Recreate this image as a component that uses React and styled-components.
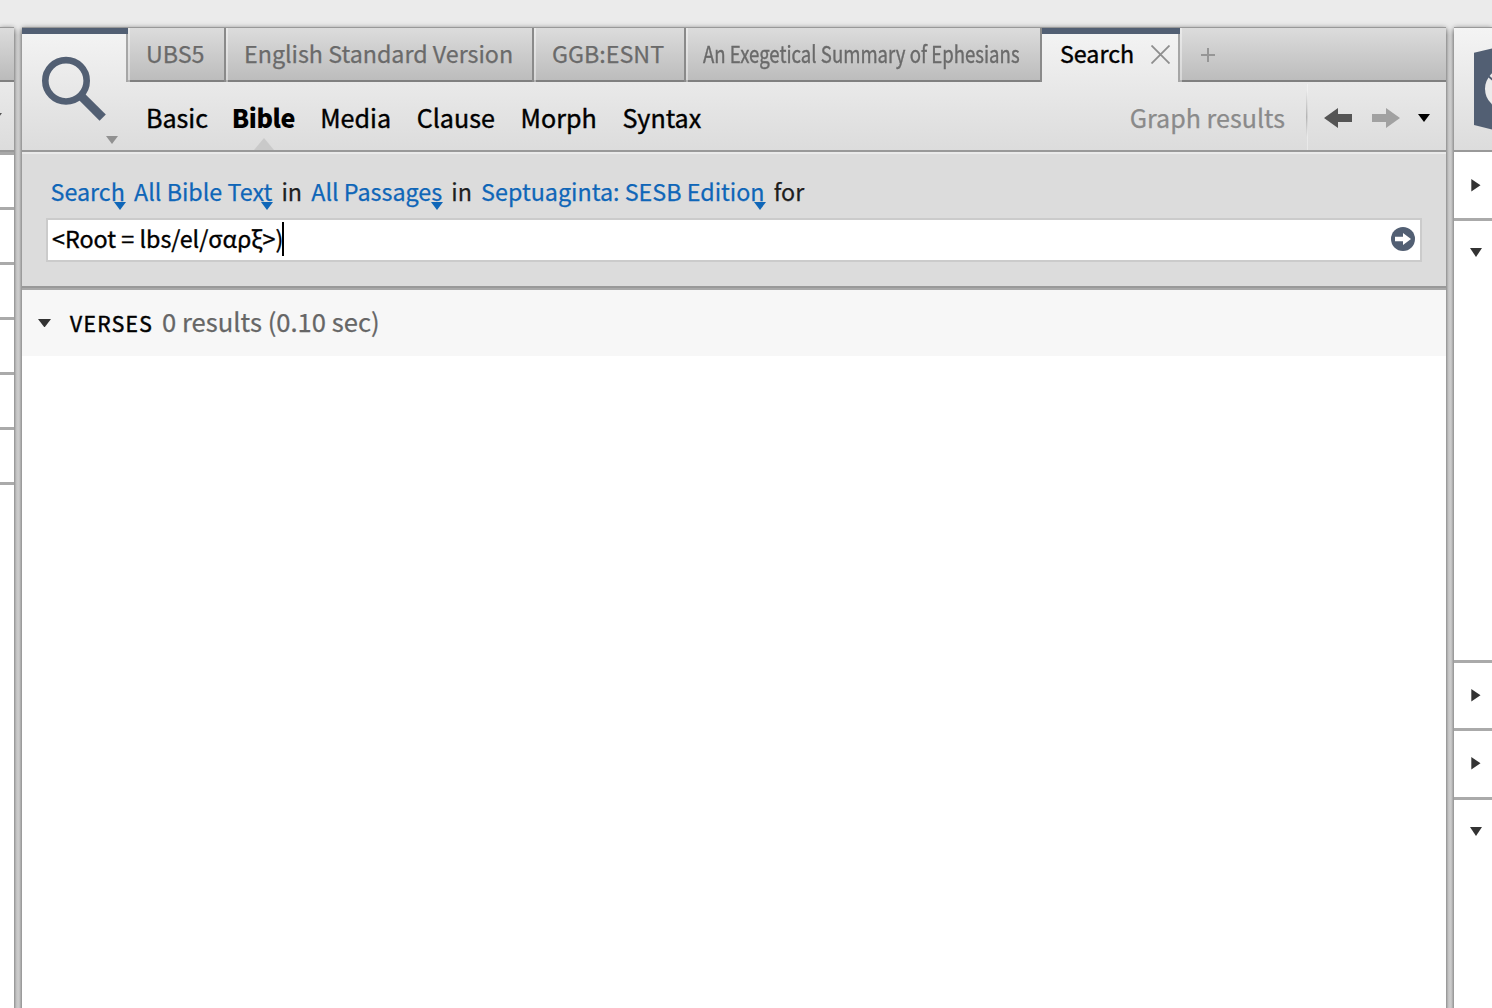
import React, {useState} from "react";
import styled, {createGlobalStyle, css} from "styled-components";

const slate = "#525f73";
const link = "#0f66b8";

const GlobalStyle = createGlobalStyle`
  * {
    box-sizing: border-box;
  }

  body {
    margin: 0;
    background: #ebebeb;
    overflow: hidden;
    font-family: "Noto Sans CJK SC", "Noto Sans", sans-serif;
    color: #000;
    -webkit-text-stroke: 0.25px currentColor;
  }

  svg {
    display: block;
    flex: none;
  }
`;

const Desktop = styled.div`
  height: 100vh;
  padding-top: 28px;
  display: grid;
  grid-template-columns: 14px 8px 1424px 8px 38px;
  overflow: hidden;
`;

const Pane = styled.section`
  display: flex;
  flex-direction: column;
  min-width: 0;
  background: #fff;
  box-shadow: 0 -1px 0 #999, 0 0 5px rgba(0, 0, 0, 0.5);

  > * {
    flex: none;
  }
`;

const Gutter = styled.div`
  z-index: 1;
  background: linear-gradient(90deg, #909090 0, #a6a6a6 1px, #bcbcbc 2px, #c9c9c9 3px, #cbcbcb 5px, #bababa 6px, #a3a3a3 7px, #949494 8px);
  mask-image: linear-gradient(transparent, #000 7px);
`;

const chrome = css`
  background: linear-gradient(#f4f4f4, #dcdcdc);
`;

const Header = styled.header`
  ${chrome};
  height: 124px;
  display: grid;
  grid-template-columns: 106px 1fr;
  border-bottom: 2px solid #999;
`;

const SideHeader = styled.header`
  ${chrome};
  height: 124px;
  border-bottom: 2px solid #999;
  overflow: hidden;
`;

const LeftHeader = styled(SideHeader)`
  height: 127px;
  border-bottom: 3px solid #a8a8a8;
  box-shadow: inset 0 -2px 0 #999;
`;

const TabEnd = styled.div`
  height: 54px;
  border-bottom: 2px solid #808080;
  background: linear-gradient(#dcdcdc, #bbb);
`;

const LeftTools = styled.div`
  padding-top: 31px;
  margin-left: -10px;
`;

const PaneIcon = styled.div`
  border-top: 6px solid ${slate};
  display: grid;
  grid-template-columns: 104px 2px;
`;

const PaneIconEdge = styled.i`
  height: 48px;
  background: #a6a6a6;
`;

const HeaderMain = styled.div`
  display: flex;
  flex-direction: column;
  min-width: 0;
`;

const TabBar = styled.nav`
  height: 54px;
  display: flex;
`;

const Tab = styled.div`
  width: ${(p) => p.$width}px;
  padding-left: ${(p) => (p.$condensed ? 17 : 18)}px;
  border-right: 2px solid #8a8a8a;
  background: linear-gradient(#dcdcdc, #bbb);
  box-shadow: inset 2px 0 0 rgba(255, 255, 255, 0.4), inset 0 -2px 0 #808080;
  color: #6a6a6a;
  font-size: 23.25px;
  line-height: 50px;
  white-space: nowrap;
`;

const ActiveTab = styled(Tab)`
  display: flex;
  border-right: 0;
  border-top: 6px solid ${slate};
  background: linear-gradient(90deg, transparent 136px, #a6a6a6 136px);
  box-shadow: none;
  color: #000;
  line-height: 38px;
  -webkit-text-stroke-width: 0.4px;

  svg {
    margin: 11px 0 0 16.3px;
  }
`;

const Condensed = styled.span`
  display: inline-block;
  transform: scaleX(0.8);
  transform-origin: 0 0;
  -webkit-text-stroke-width: 0.4px;
`;

const TabRest = styled.div`
  flex: 1;
  padding: 20px 0 0 21px;
  background: linear-gradient(#dcdcdc, #bbb);
  box-shadow: inset 2px 0 0 rgba(255, 255, 255, 0.4), inset 0 -2px 0 #808080;
`;

const Toolbar = styled.div`
  flex: 1;
  display: flex;
  align-items: flex-start;
  padding: 0 16px 0 18px;
`;

const MenuItem = styled.div`
  position: relative;
  margin-right: 25.7px;
  font-size: 25.1px;
  line-height: 71px;
  -webkit-text-stroke-width: 0.4px;
  cursor: pointer;

  ${(p) => p.$active && css`
    margin: 0 25px 0 -2px;
    font-weight: 900;
    letter-spacing: -0.38px;
    -webkit-text-stroke-width: 0;
  `}
`;

const Pointer = styled.svg`
  position: absolute;
  left: calc(50% + 0.8px);
  bottom: 3px;
  transform: translateX(-50%);
`;

const GraphLink = styled.div`
  margin-left: auto;
  color: #8a8a8a;
  font-size: 25.1px;
  line-height: 71px;
`;

const Divider = styled.i`
  width: 2px;
  height: 66px;
  margin: 2px 16px 0 21px;
  background: linear-gradient(90deg, transparent 1px, rgba(255, 255, 255, 0.35) 1px),
    linear-gradient(transparent 10%, #b4b4b4 50%, transparent 80%);
`;

const NavIcons = styled.div`
  display: flex;
  align-items: center;
  height: 72px;

  svg + svg {
    margin-left: 20px;
  }

  svg:last-child {
    margin-left: 18px;
  }
`;

const SearchPanel = styled.div`
  height: 138px;
  padding: 12px 24px 0;
  background: #dcdcdc;
  border-top: 2px solid #eaeaea;
  border-bottom: 2px solid #a9a9a9;
  box-shadow: inset 0 -2px 0 #999;
`;

const Query = styled.div`
  height: 52px;
  display: flex;
  gap: 9.2px;
  padding-left: 4.5px;
  color: #1e1e1e;
  font-size: 23.3px;
  line-height: 50px;
  white-space: nowrap;
`;

const QueryLink = styled.span`
  position: relative;
  color: ${link};
  cursor: pointer;

  svg {
    position: absolute;
    right: -1.2px;
    top: 36px;
  }
`;

const SearchField = styled.div`
  height: 44px;
  display: flex;
  align-items: center;
  padding: 0 4px;
  border: 2px solid #cbcbcb;
  background: #fff;
  font-size: 23.3px;
  line-height: 36px;

  svg {
    margin: -2px 1px 0 auto;
  }
`;

const FieldText = styled.span`
  height: 40px;
  -webkit-text-stroke-width: 0.35px;
`;

const Caret = styled.i`
  width: 2px;
  height: 34px;
  margin: -2px 0 0 -1px;
  background: #000;
`;

const Results = styled.div`
  height: 66px;
  display: flex;
  align-items: flex-start;
  padding-left: 15.5px;
  background: #f7f7f7;

  svg {
    margin-top: 28.5px;
  }
`;

const ResultsTitle = styled.span`
  width: 92px;
  margin-left: 19.5px;
  font-size: 21px;
  line-height: 66px;
  letter-spacing: 1.4px;
  -webkit-text-stroke-width: 0.5px;
`;

const ResultsCount = styled.span`
  color: #666;
  font-size: 25.6px;
  line-height: 61px;
`;

const SideRow = styled.div`
  height: ${(p) => p.$height}px;
  padding: ${(p) => p.$pad}px 0 0 16px;
  border-bottom: 3px solid #aaa;
`;

const Down = ({width = 12, height = 8, color = "#333"}) => (
    <svg width={width} height={height} viewBox="0 0 12 8" preserveAspectRatio="none">
        <path d="M0 0h12L6 8z" fill={color}/>
    </svg>
);

const Right = () => (
    <svg width="11" height="13" viewBox="0 0 11 13">
        <path d="M1.3 0l9.2 6.3-9.2 6.3z" fill="#333"/>
    </svg>
);

const ArrowIcon = ({forward}) => (
    <svg width="28" height="20" viewBox="0 0 28 20">
        <path
            d="M0 10L14 0v6h14v8H14v6z"
            fill={forward ? "#a1a1a1" : "#555"}
            transform={forward ? "rotate(180 14 10)" : undefined}
        />
    </svg>
);

const MagnifierIcon = () => (
    <svg width="104" height="116" viewBox="0 0 104 116">
        <circle cx="44" cy="46.8" r="20.7" fill="none" stroke={slate} strokeWidth="6.6"/>
        <path d="M58.5 61.5L80.7 83.7" stroke={slate} strokeWidth="8.8"/>
        <path d="M84 102h12l-6 8z" fill="#919191"/>
    </svg>
);

// only the left edge of the book fits in the pane
const BookIcon = () => (
    <svg width="38" height="122" viewBox="0 0 38 122">
        <path d="M20 24.8L40 20v82l-20-5z" fill={slate}/>
        <circle cx="51.6" cy="60.8" r="20.6" fill="#ebebeb"/>
        <path d="M33.5 47.5l6 5" stroke={slate} strokeWidth="1.8"/>
    </svg>
);

const tabs = [
    {name: "UBS5", width: 98},
    {name: "English Standard Version", width: 308},
    {name: "GGB:ESNT", width: 152},
    {name: "An Exegetical Summary of Ephesians", width: 356, condensed: true},
];

const modes = ["Basic", "Bible", "Media", "Clause", "Morph", "Syntax"];

const sections = [
    {height: 69, pad: 27},
    {height: 442, pad: 27, open: true},
    {height: 68, pad: 26},
    {height: 69, pad: 26},
    {height: 211, pad: 27, open: true},
];

const App = () => {
    const [mode, setMode] = useState("Bible");

    return (
        <>
            <GlobalStyle/>
            <Desktop>
                <Pane>
                    <LeftHeader>
                        <TabEnd/>
                        <LeftTools><Down color="#555"/></LeftTools>
                    </LeftHeader>
                    {[1, 2, 3, 4, 5, 6].map((n) => (
                        <SideRow key={n} $height={55} $pad={0}/>
                    ))}
                </Pane>
                <Gutter/>

                <Pane>
                    <Header>
                        <PaneIcon>
                            <MagnifierIcon/>
                            <PaneIconEdge/>
                        </PaneIcon>
                        <HeaderMain>
                            <TabBar>
                                {tabs.map((tab) => (
                                    <Tab key={tab.name} $width={tab.width} $condensed={tab.condensed}>
                                        {tab.condensed ? <Condensed>{tab.name}</Condensed> : tab.name}
                                    </Tab>
                                ))}
                                <ActiveTab $width={138}>
                                    Search
                                    <svg width="19" height="19" viewBox="0 0 19 19">
                                        <path d="M.5.5l18 18M18.5.5l-18 18" stroke="#8e8e8e" strokeWidth="1.8"/>
                                    </svg>
                                </ActiveTab>
                                <TabRest>
                                    <svg width="14" height="14" viewBox="0 0 14 14">
                                        <path d="M0 7h14M7 0v14" stroke="#969696" strokeWidth="2"/>
                                    </svg>
                                </TabRest>
                            </TabBar>
                            <Toolbar>
                                {modes.map((name) => (
                                    <MenuItem key={name} $active={name === mode} onClick={() => setMode(name)}>
                                        {name}
                                        {name === mode && (
                                            <Pointer width="20" height="12" viewBox="0 0 20 12">
                                                <path d="M0 12L10 0l10 12z" fill="#c9c9c9"/>
                                            </Pointer>
                                        )}
                                    </MenuItem>
                                ))}
                                <GraphLink>Graph results</GraphLink>
                                <Divider/>
                                <NavIcons>
                                    <ArrowIcon/>
                                    <ArrowIcon forward/>
                                    <Down color="#000"/>
                                </NavIcons>
                            </Toolbar>
                        </HeaderMain>
                    </Header>

                    <SearchPanel>
                        <Query>
                            <QueryLink>Search<Down color={link}/></QueryLink>
                            <QueryLink>All Bible Text<Down color={link}/></QueryLink>
                            <span>in</span>
                            <QueryLink>All Passages<Down color={link}/></QueryLink>
                            <span>in</span>
                            <QueryLink>Septuaginta: SESB Edition<Down color={link}/></QueryLink>
                            <span>for</span>
                        </Query>
                        <SearchField>
                            <FieldText>{"<Root = lbs/el/σαρξ>)"}</FieldText>
                            <Caret/>
                            <svg width="24" height="24" viewBox="0 0 24 24">
                                <circle cx="12" cy="12" r="12" fill={slate}/>
                                <path d="M4 9.8h8V6l8 6-8 6v-3.8H4z" fill="#fff"/>
                            </svg>
                        </SearchField>
                    </SearchPanel>

                    <Results>
                        <Down width={13} height={8.5}/>
                        <ResultsTitle>VERSES</ResultsTitle>
                        <ResultsCount>0 results (0.10 sec)</ResultsCount>
                    </Results>
                </Pane>

                <Gutter/>
                <Pane>
                    <SideHeader><BookIcon/></SideHeader>
                    {sections.map((section, i) => (
                        <SideRow key={i} $height={section.height} $pad={section.pad}>
                            {section.open ? <Down height={9}/> : <Right/>}
                        </SideRow>
                    ))}
                </Pane>
            </Desktop>
        </>
    );
};

export default App;
